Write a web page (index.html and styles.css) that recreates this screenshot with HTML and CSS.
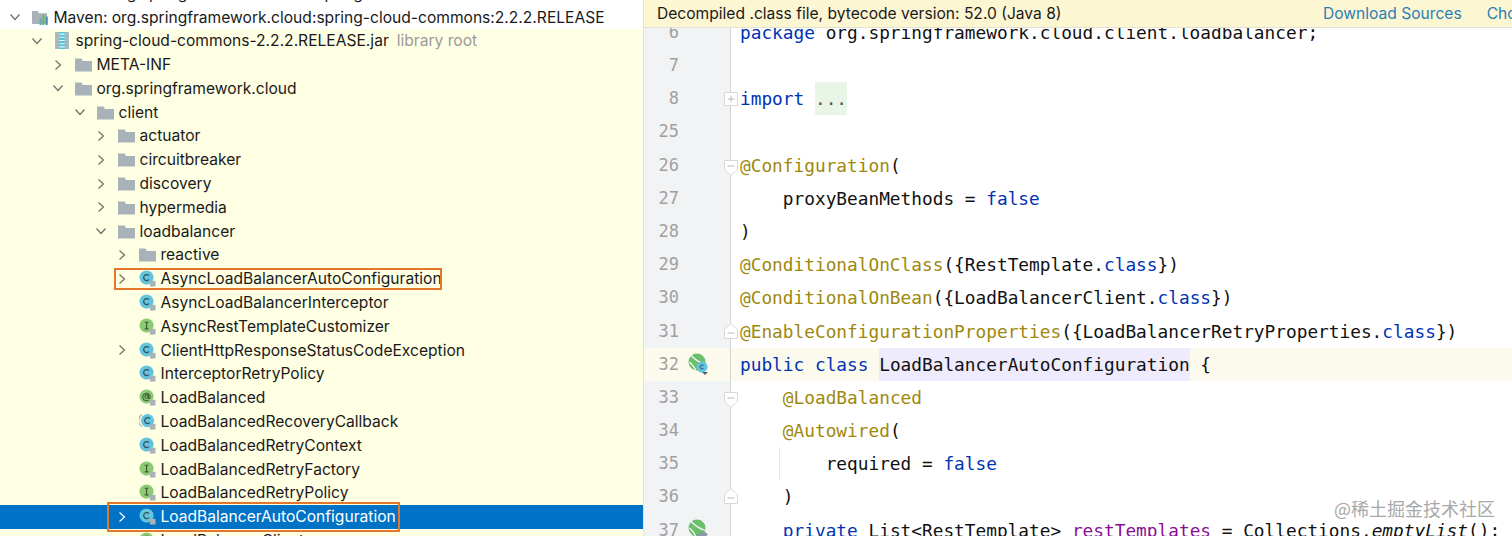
FILE: index.html
```html
<!DOCTYPE html>
<html lang="en">
<head>
  <meta charset="UTF-8">
  <title>Decompiled class in IDE</title>
  <link rel="stylesheet" href="styles.css">
</head>
<body>
  <svg class="defs" width="0" height="0">
    <symbol id="arrow-right" viewBox="0 0 14 14"><path d="M4.5 2.5 9.5 7l-5 4.5" fill="none" stroke="currentColor" stroke-width="1.2"/></symbol>
    <symbol id="arrow-down" viewBox="0 0 14 14"><path d="M2.5 4.5 7 9.5l4.500-5" fill="none" stroke="currentColor" stroke-width="1.2"/></symbol>
    <symbol id="folder" viewBox="0 0 17 14"><path d="M0 1h6.500l1.500 2.500h9V14H0z" fill="#a9b2b9"/></symbol>
    <symbol id="maven" viewBox="0 0 18 16"><path d="M0 1h6l1.500 2.500H16V15H0z" fill="#a9b2b9"/><rect x="8" y="9" width="2.200" height="7" fill="#5aa7d6"/><rect x="11" y="5" width="2.200" height="11" fill="#69b85f"/><rect x="14.500" y="7" width="2.200" height="9" fill="#4c8fbf"/></symbol>
    <symbol id="jar" viewBox="0 0 14 16"><rect x="0" y="0" width="13" height="16" fill="#a9b8bf"/><rect x="4" y="0" width="5" height="16" fill="#4fc3d9"/><path d="M4 2h5M4 5h5M4 8h5M4 11h5M4 14h5" stroke="#e8fbff" stroke-width="1"/></symbol>
    <symbol id="class" viewBox="0 0 18 18"><circle cx="8" cy="8" r="7.500" fill="#62c4de"/><path d="M10.500 5.800a3.200 3.200 0 1 0 0 4.400" fill="none" stroke="#33505c" stroke-width="1.300"/><rect x="11.500" y="11.500" width="6" height="6" fill="#a9b2b9"/></symbol>
    <symbol id="callback" viewBox="0 0 18 18"><path d="M3 1.500a8 8 0 0 0 0 13" fill="none" stroke="#a9b2b9" stroke-width="1.200"/><circle cx="9" cy="8" r="7" fill="#62c4de"/><path d="M11.500 5.800a3.200 3.200 0 1 0 0 4.400" fill="none" stroke="#33505c" stroke-width="1.300"/><rect x="11.500" y="11.500" width="6" height="6" fill="#a9b2b9"/></symbol>
    <symbol id="iface" viewBox="0 0 18 18"><circle cx="8" cy="8" r="7.500" fill="#8ccb74"/><path d="M6 4.500h4M6 11.500h4M8 4.500v7" fill="none" stroke="#3c5a34" stroke-width="1.200"/><rect x="11.500" y="11.500" width="6" height="6" fill="#a9b2b9"/></symbol>
    <symbol id="anno" viewBox="0 0 18 18"><circle cx="8" cy="8" r="7.500" fill="#8ccb74"/><circle cx="8" cy="8" r="1.800" fill="none" stroke="#3c5a34" stroke-width="1.100"/><path d="M9.800 5.800v3.400c0 1.200 2 1.200 2 -.8a3.900 3.900 0 1 0-1.600 3.200" fill="none" stroke="#3c5a34" stroke-width="1.100"/><rect x="11.500" y="11.500" width="6" height="6" fill="#a9b2b9"/></symbol>
    <symbol id="bean" viewBox="0 0 22 22"><circle cx="9" cy="9" r="8.500" fill="#6cbf6a"/><path d="M3 2.500c4 4 8 7 14 9M1.500 9c3 3 5 5 6 8" fill="none" stroke="#f4f6f4" stroke-width="1.300"/><circle cx="14" cy="14" r="5.500" fill="#62c4de"/><path d="M15.500 12.600a2 2 0 1 0 0 2.800" fill="none" stroke="#33505c" stroke-width="1"/><path d="M14 19h6l-3 3z" fill="#555c61"/></symbol>
    <symbol id="bean-out" viewBox="0 0 22 22"><circle cx="9" cy="9" r="8.500" fill="#6cbf6a"/><path d="M3 2.500c4 4 8 7 14 9M1.500 9c3 3 5 5 6 8" fill="none" stroke="#f4f6f4" stroke-width="1.300"/><path d="M9 14h6v-3l5 4.500-5 4.500v-3H9z" fill="#8d9aa6"/></symbol>
    <symbol id="fold-plus" viewBox="0 0 14 14"><path d="M.5.500h13v13H.5z" fill="#fff" stroke="#d8d8d8"/><path d="M3.500 7h7M7 3.500v7" stroke="#bbb"/></symbol>
    <symbol id="fold-top" viewBox="0 0 14 16"><path d="M.5.500h13v9L7 15.500.5 9.500z" fill="#fff" stroke="#d8d8d8"/><path d="M3.500 6h7" stroke="#bbb"/></symbol>
    <symbol id="fold-end" viewBox="0 0 14 16"><path d="M.5 15.500h13v-9L7 .500.5 6.500z" fill="#fff" stroke="#d8d8d8"/><path d="M3.500 10h7" stroke="#bbb"/></symbol>
  </svg>

  <div class="window">
    <div class="tree">
      <div class="row l0 plain"><span class="arrow"></span><span class="icon"></span><span>Maven: org.springframework.cloud:spring-cloud-context:2.2.2.RELEASE</span></div>
      <div class="row l0 plain"><svg class="arrow"><use href="#arrow-down"/></svg><svg class="icon"><use href="#maven"/></svg><span>Maven: org.springframework.cloud:spring-cloud-commons:2.2.2.RELEASE</span></div>
      <div class="row l1"><svg class="arrow"><use href="#arrow-down"/></svg><svg class="icon"><use href="#jar"/></svg><span>spring-cloud-commons-2.2.2.RELEASE.jar</span><span class="hint">library root</span></div>
      <div class="row l2"><svg class="arrow"><use href="#arrow-right"/></svg><svg class="icon"><use href="#folder"/></svg><span>META-INF</span></div>
      <div class="row l2"><svg class="arrow"><use href="#arrow-down"/></svg><svg class="icon"><use href="#folder"/></svg><span>org.springframework.cloud</span></div>
      <div class="row l3"><svg class="arrow"><use href="#arrow-down"/></svg><svg class="icon"><use href="#folder"/></svg><span>client</span></div>
      <div class="row l4"><svg class="arrow"><use href="#arrow-right"/></svg><svg class="icon"><use href="#folder"/></svg><span>actuator</span></div>
      <div class="row l4"><svg class="arrow"><use href="#arrow-right"/></svg><svg class="icon"><use href="#folder"/></svg><span>circuitbreaker</span></div>
      <div class="row l4"><svg class="arrow"><use href="#arrow-right"/></svg><svg class="icon"><use href="#folder"/></svg><span>discovery</span></div>
      <div class="row l4"><svg class="arrow"><use href="#arrow-right"/></svg><svg class="icon"><use href="#folder"/></svg><span>hypermedia</span></div>
      <div class="row l4"><svg class="arrow"><use href="#arrow-down"/></svg><svg class="icon"><use href="#folder"/></svg><span>loadbalancer</span></div>
      <div class="row l5"><svg class="arrow"><use href="#arrow-right"/></svg><svg class="icon"><use href="#folder"/></svg><span>reactive</span></div>
      <div class="row l5"><svg class="arrow"><use href="#arrow-right"/></svg><svg class="icon"><use href="#class"/></svg><span>AsyncLoadBalancerAutoConfiguration</span><i class="mark mark-async"></i></div>
      <div class="row l5"><span class="arrow"></span><svg class="icon"><use href="#class"/></svg><span>AsyncLoadBalancerInterceptor</span></div>
      <div class="row l5"><span class="arrow"></span><svg class="icon"><use href="#iface"/></svg><span>AsyncRestTemplateCustomizer</span></div>
      <div class="row l5"><svg class="arrow"><use href="#arrow-right"/></svg><svg class="icon"><use href="#class"/></svg><span>ClientHttpResponseStatusCodeException</span></div>
      <div class="row l5"><span class="arrow"></span><svg class="icon"><use href="#class"/></svg><span>InterceptorRetryPolicy</span></div>
      <div class="row l5"><span class="arrow"></span><svg class="icon"><use href="#anno"/></svg><span>LoadBalanced</span></div>
      <div class="row l5"><span class="arrow"></span><svg class="icon"><use href="#callback"/></svg><span>LoadBalancedRecoveryCallback</span></div>
      <div class="row l5"><span class="arrow"></span><svg class="icon"><use href="#class"/></svg><span>LoadBalancedRetryContext</span></div>
      <div class="row l5"><span class="arrow"></span><svg class="icon"><use href="#iface"/></svg><span>LoadBalancedRetryFactory</span></div>
      <div class="row l5"><span class="arrow"></span><svg class="icon"><use href="#iface"/></svg><span>LoadBalancedRetryPolicy</span></div>
      <div class="row l5 selected"><svg class="arrow"><use href="#arrow-right"/></svg><svg class="icon"><use href="#class"/></svg><span>LoadBalancerAutoConfiguration</span><i class="mark mark-selected"></i></div>
      <div class="row l5"><span class="arrow"></span><svg class="icon"><use href="#iface"/></svg><span>LoadBalancerClient</span></div>
    </div>

    <div class="editor">
      <div class="banner">
        <span class="banner-text">Decompiled .class file, bytecode version: 52.0 (Java 8)</span>
        <a class="banner-link">Download Sources</a>
        <a class="banner-link last">Choose Sources...</a>
      </div>
      <div class="code">
        <div class="line"><div class="gutter"><span class="num">6</span></div><pre><b class="kw">package</b> org.springframework.cloud.client.loadbalancer;</pre></div>
        <div class="line"><div class="gutter"><span class="num">7</span></div><pre></pre></div>
        <div class="line"><div class="gutter"><span class="num">8</span><svg class="fold"><use href="#fold-plus"/></svg></div><pre><b class="kw">import</b> <span class="folded">...</span></pre></div>
        <div class="line"><div class="gutter"><span class="num">25</span></div><pre></pre></div>
        <div class="line"><div class="gutter"><span class="num">26</span><svg class="fold fold-down"><use href="#fold-top"/></svg></div><pre><span class="an">@Configuration</span>(</pre></div>
        <div class="line"><div class="gutter"><span class="num">27</span></div><pre>    proxyBeanMethods = <b class="kw">false</b></pre></div>
        <div class="line"><div class="gutter"><span class="num">28</span></div><pre>)</pre></div>
        <div class="line"><div class="gutter"><span class="num">29</span></div><pre><span class="an">@ConditionalOnClass</span>({RestTemplate.<b class="kw">class</b>})</pre></div>
        <div class="line"><div class="gutter"><span class="num">30</span></div><pre><span class="an">@ConditionalOnBean</span>({LoadBalancerClient.<b class="kw">class</b>})</pre></div>
        <div class="line"><div class="gutter"><span class="num">31</span><svg class="fold fold-up"><use href="#fold-end"/></svg></div><pre><span class="an">@EnableConfigurationProperties</span>({LoadBalancerRetryProperties.<b class="kw">class</b>})</pre></div>
        <div class="line current"><div class="gutter"><span class="num">32</span><svg class="bean"><use href="#bean"/></svg></div><pre><b class="kw">public class</b> <span class="usage">LoadBalancerAutoConfiguration</span> {</pre></div>
        <div class="line"><div class="gutter"><span class="num">33</span><svg class="fold fold-down"><use href="#fold-top"/></svg></div><pre>    <span class="an">@LoadBalanced</span></pre></div>
        <div class="line"><div class="gutter"><span class="num">34</span></div><pre>    <span class="an">@Autowired</span>(</pre></div>
        <div class="line"><div class="gutter"><span class="num">35</span></div><pre class="guide">        required = <b class="kw">false</b></pre></div>
        <div class="line"><div class="gutter"><span class="num">36</span><svg class="fold fold-up"><use href="#fold-end"/></svg></div><pre>    )</pre></div>
        <div class="line"><div class="gutter"><span class="num">37</span><svg class="bean"><use href="#bean-out"/></svg></div><pre>    <b class="kw">private</b> List&lt;RestTemplate&gt; <span class="field">restTemplates</span> = Collections.<em>emptyList</em>();</pre></div>
      </div>
      <div class="watermark">@稀土掘金技术社区</div>
    </div>
  </div>
</body>
</html>
```

FILE: styles.css
```css
* {
  margin: 0;
  padding: 0;
  box-sizing: border-box;
}

html, body {
  height: 100%;
  overflow: hidden;
}

body {
  background: #fff;
  font-family: Inter, 'Noto Sans', sans-serif;
  color: #1a1a1a;
}

.defs {
  display: block;
  height: 0;
}

.window {
  display: flex;
  height: 536px;
  overflow: hidden;
}

/* Project tree */
.tree {
  width: 644px;
  flex: none;
  margin-top: -18.7px;
  background: #ffffe4;
  border-right: 1px solid #e6e3c6;
  font-size: 15.6px;
}

.row {
  position: relative;
  display: flex;
  align-items: center;
  height: 23.8px;
  white-space: nowrap;
}

.plain {
  background: #fff;
}

.l0 { padding-left: 8px; }
.l1 { padding-left: 30px; }
.l2 { padding-left: 51px; }
.l3 { padding-left: 73px; }
.l4 { padding-left: 94px; }
.l5 { padding-left: 115px; }

.arrow {
  width: 14px;
  height: 14px;
  flex: none;
  margin-right: 10px;
  color: #6e6e6e;
}

.icon {
  width: 17px;
  height: 17px;
  flex: none;
  margin-right: 4.5px;
}

.hint {
  margin-left: 8px;
  color: #9a9a9a;
}

.selected {
  background: #0073c6;
  color: #fff;
}

.selected .arrow {
  color: #fff;
}

/* Orange boxes drawn over the tree */
.mark {
  position: absolute;
  border: 2.5px solid #e5772c;
}

.mark-async {
  left: 114px;
  right: 201px;
  top: 1.5px;
  bottom: 0.5px;
}

.mark-selected {
  left: 106.500px;
  right: 243px;
  top: -2.500px;
  bottom: -3px;
}

/* Editor */
.editor {
  position: relative;
  flex: 1;
  min-width: 0;
  overflow: hidden;
}

.banner {
  position: relative;
  z-index: 1;
  display: flex;
  align-items: center;
  height: 28px;
  padding-left: 13px;
  background: #fdf6d3;
  border-bottom: 1px solid #e4e1d0;
  font-size: 15.600px;
  white-space: nowrap;
}

.banner-text {
  width: 666px;
  flex: none;
}

.banner-link {
  color: #2a7fb5;
}

.banner-link.last {
  margin-left: 25px;
}

.code {
  margin-top: -12.200px;
}

.line {
  display: flex;
  height: 33.200px;
  font-family: 'DejaVu Sans Mono', 'Liberation Mono', monospace;
  font-size: 17.800px;
  line-height: 33.200px;
}

.gutter {
  position: relative;
  width: 87px;
  flex: none;
  padding-right: 51px;
  background: #f2f3f4;
  border-right: 1px solid #d5d5d5;
  color: #a0a0a0;
  text-align: right;
  font-size: 17px;
}

.num {
  display: block;
}

.line pre {
  flex: 1;
  padding-left: 9px;
  font: inherit;
  white-space: pre;
  color: #111;
}

.fold {
  position: absolute;
  left: 80px;
  top: 9px;
  width: 14px;
  height: 16px;
}

.fold-down {
  top: 11px;
}

.fold-up {
  top: 8px;
}

.bean {
  position: absolute;
  left: 44px;
  top: 5px;
  width: 22px;
  height: 22px;
}

.line.current pre,
.line.current .gutter {
  background: #fcfaed;
}

.kw {
  font-weight: 400;
  color: #0033b3;
}

.an {
  color: #9e880d;
}

.field {
  color: #871094;
}

.folded {
  display: inline-block;
  height: 33.200px;
  background: #e9f5e6;
  color: #555;
}

.usage {
  display: inline-block;
  height: 33.200px;
  background: #edebfc;
}

.guide {
  background: linear-gradient(#e6e6e6, #e6e6e6) 48px 0 / 1px 100% no-repeat;
}

.watermark {
  position: absolute;
  right: 17px;
  top: 495px;
  z-index: 2;
  font-family: 'Noto Sans CJK SC', sans-serif;
  font-size: 18px;
  color: #a8a8a8;
  white-space: nowrap;
}
```
